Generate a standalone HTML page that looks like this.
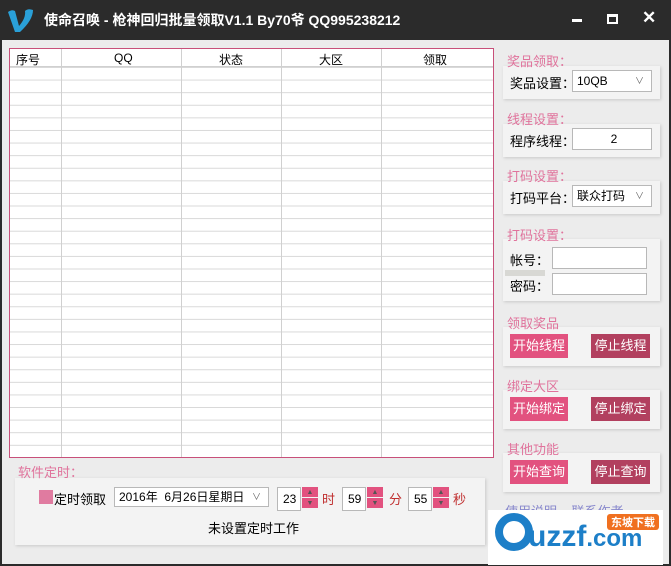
<!DOCTYPE html>
<html><head><meta charset="utf-8"><style>
*{margin:0;padding:0;box-sizing:border-box}
body{width:671px;height:566px;overflow:hidden;background:#2b2b2b;font-family:"Liberation Sans","Noto Sans CJK SC",sans-serif;font-size:12px;color:#000;position:relative}
.a{position:absolute}
#body{left:2px;top:40px;width:667px;height:524px;background:#ececec}
.title{left:44px;top:10px;color:#fff;font-weight:bold;font-size:14px}
.lbl{color:#e0739c;font-size:13px}
.pnl{background:#f3f3f3;box-shadow:1px 1px 3px #c8c8c8}
.btn{height:24px;color:#fff;font-size:13px;line-height:24px;text-align:center}
.p1{background:#e2527f}.p2{background:#b2405f}
.inp{background:#fff;border:1px solid #b8b8b8;height:22px;line-height:20px;padding-left:4px}
.spin{width:16px;height:22px;background:#e2527f}
.spin div{height:11px;border-bottom:1px solid #f3f3f3;color:#555;font-size:7px;text-align:center;line-height:11px}
</style></head><body>
<svg class="a" style="left:6px;top:6px" width="30" height="28" viewBox="0 0 30 28"><path d="M2 6 Q6 3 9 5 L13 20 Q20 12 19 5 Q22 2 27 4 Q27 14 14 26 L9 26 Z" fill="#2aa0d8"/></svg>
<div class="a title">使命召唤 - 枪神回归批量领取V1.1 By70爷 QQ995238212</div>
<div class="a" style="left:572px;top:19px;width:10px;height:3px;background:#fff"></div>
<div class="a" style="left:607px;top:14px;width:11px;height:10px;border:2px solid #fff;border-top-width:3px"></div>
<div class="a" style="left:642px;top:8px;color:#fff;font-size:17px;font-weight:bold">✕</div>
<div class="a" id="body"></div>

<!-- table -->
<div class="a" style="left:9px;top:48px;width:485px;height:410px;border:1px solid #c8507a;background:#fff;
background-image:linear-gradient(#d8d8d8 1px,transparent 1px);background-size:100% 12.6px;background-position:0 18px"></div>
<div class="a" style="left:10px;top:49px;width:483px;height:18px;background:#fff;border-bottom:1px solid #d0d0d0"></div>
<div class="a" style="left:61px;top:49px;width:1px;height:408px;background:#d0d0d0"></div>
<div class="a" style="left:181px;top:49px;width:1px;height:408px;background:#d0d0d0"></div>
<div class="a" style="left:281px;top:49px;width:1px;height:408px;background:#d0d0d0"></div>
<div class="a" style="left:381px;top:49px;width:1px;height:408px;background:#d0d0d0"></div>
<div class="a" style="left:16px;top:51px">序号</div>
<div class="a" style="left:114px;top:51px">QQ</div>
<div class="a" style="left:219px;top:51px">状态</div>
<div class="a" style="left:319px;top:51px">大区</div>
<div class="a" style="left:423px;top:51px">领取</div>

<!-- right -->
<div class="a pnl" style="left:503px;top:66px;width:157px;height:33px"></div>
<div class="a lbl" style="left:507px;top:51px">奖品领取：</div>
<div class="a" style="left:510px;top:73px;font-size:13px">奖品设置：</div>
<div class="a inp" style="left:572px;top:70px;width:80px">10QB<span style="float:right;width:16px;color:#666;font-size:9px">∨</span></div>

<div class="a pnl" style="left:503px;top:124px;width:157px;height:33px"></div>
<div class="a lbl" style="left:507px;top:109px">线程设置：</div>
<div class="a" style="left:510px;top:131px;font-size:13px">程序线程：</div>
<div class="a inp" style="left:572px;top:128px;width:80px;text-align:center">2</div>

<div class="a pnl" style="left:503px;top:181px;width:157px;height:33px"></div>
<div class="a lbl" style="left:507px;top:166px">打码设置：</div>
<div class="a" style="left:510px;top:188px;font-size:13px">打码平台：</div>
<div class="a inp" style="left:572px;top:185px;width:80px">联众打码<span style="float:right;width:16px;color:#666;font-size:9px">∨</span></div>

<div class="a pnl" style="left:503px;top:239px;width:157px;height:62px"></div>
<div class="a lbl" style="left:507px;top:225px">打码设置：</div>
<div class="a" style="left:505px;top:270px;width:40px;height:6px;background:#d8d8d4"></div>
<div class="a" style="left:510px;top:250px;font-size:13px">帐号：</div>
<div class="a inp" style="left:552px;top:247px;width:95px"></div>
<div class="a" style="left:510px;top:276px;font-size:13px">密码：</div>
<div class="a inp" style="left:552px;top:273px;width:95px"></div>

<div class="a pnl" style="left:503px;top:327px;width:157px;height:39px"></div>
<div class="a lbl" style="left:507px;top:313px">领取奖品</div>
<div class="a btn p1" style="left:510px;top:334px;width:58px">开始线程</div>
<div class="a btn p2" style="left:591px;top:334px;width:59px">停止线程</div>

<div class="a pnl" style="left:503px;top:390px;width:157px;height:39px"></div>
<div class="a lbl" style="left:507px;top:376px">绑定大区</div>
<div class="a btn p1" style="left:510px;top:397px;width:58px">开始绑定</div>
<div class="a btn p2" style="left:591px;top:397px;width:59px">停止绑定</div>

<div class="a pnl" style="left:503px;top:453px;width:157px;height:39px"></div>
<div class="a lbl" style="left:507px;top:439px">其他功能</div>
<div class="a btn p1" style="left:510px;top:460px;width:58px">开始查询</div>
<div class="a btn p2" style="left:591px;top:460px;width:59px">停止查询</div>

<div class="a" style="left:505px;top:501px;color:#8888cc;font-size:13px">使用说明 &nbsp;&nbsp; 联系作者</div>
<div class="a" style="left:488px;top:510px;width:175px;height:55px;background:#fff"></div>
<div class="a" style="left:495px;top:513px;width:38px;height:38px;border:8px solid #1d7fc8;border-radius:50%"></div>
<div class="a" style="left:528px;top:520px;color:#1d7fc8;font-weight:bold;font-size:30px;font-family:'Liberation Sans',sans-serif">uzzf<span style="font-size:24px">.com</span></div>
<div class="a" style="left:607px;top:514px;background:#f07020;color:#fff;font-size:11px;font-weight:bold;padding:0 4px;border-radius:3px">东坡下载</div>

<!-- bottom -->
<div class="a pnl" style="left:15px;top:478px;width:470px;height:67px"></div>
<div class="a lbl" style="left:18px;top:462px">软件定时：</div>
<div class="a" style="left:39px;top:490px;width:14px;height:14px;background:#e07ba0"></div>
<div class="a" style="left:54px;top:489px;font-size:13px">定时领取</div>
<div class="a inp" style="left:114px;top:487px;width:155px;height:20px;line-height:18px">2016年 &nbsp;6月26日星期日<span style="float:right;width:16px;color:#666;font-size:9px">∨</span></div>
<div class="a inp" style="left:277px;top:487px;width:24px;height:24px;line-height:22px;padding-left:5px">23</div>
<div class="a spin" style="left:302px;top:487px;height:22px"><div>▲</div><div>▼</div></div>
<div class="a" style="left:322px;top:489px;color:#c03030;font-size:13px">时</div>
<div class="a inp" style="left:342px;top:487px;width:24px;height:24px;line-height:22px;padding-left:5px">59</div>
<div class="a spin" style="left:367px;top:487px"><div>▲</div><div>▼</div></div>
<div class="a" style="left:389px;top:489px;color:#c03030;font-size:13px">分</div>
<div class="a inp" style="left:408px;top:487px;width:24px;height:24px;line-height:22px;padding-left:5px">55</div>
<div class="a spin" style="left:433px;top:487px"><div>▲</div><div>▼</div></div>
<div class="a" style="left:453px;top:489px;color:#c03030;font-size:13px">秒</div>
<div class="a" style="left:208px;top:518px;font-size:13px">未设置定时工作</div>
</body></html>
